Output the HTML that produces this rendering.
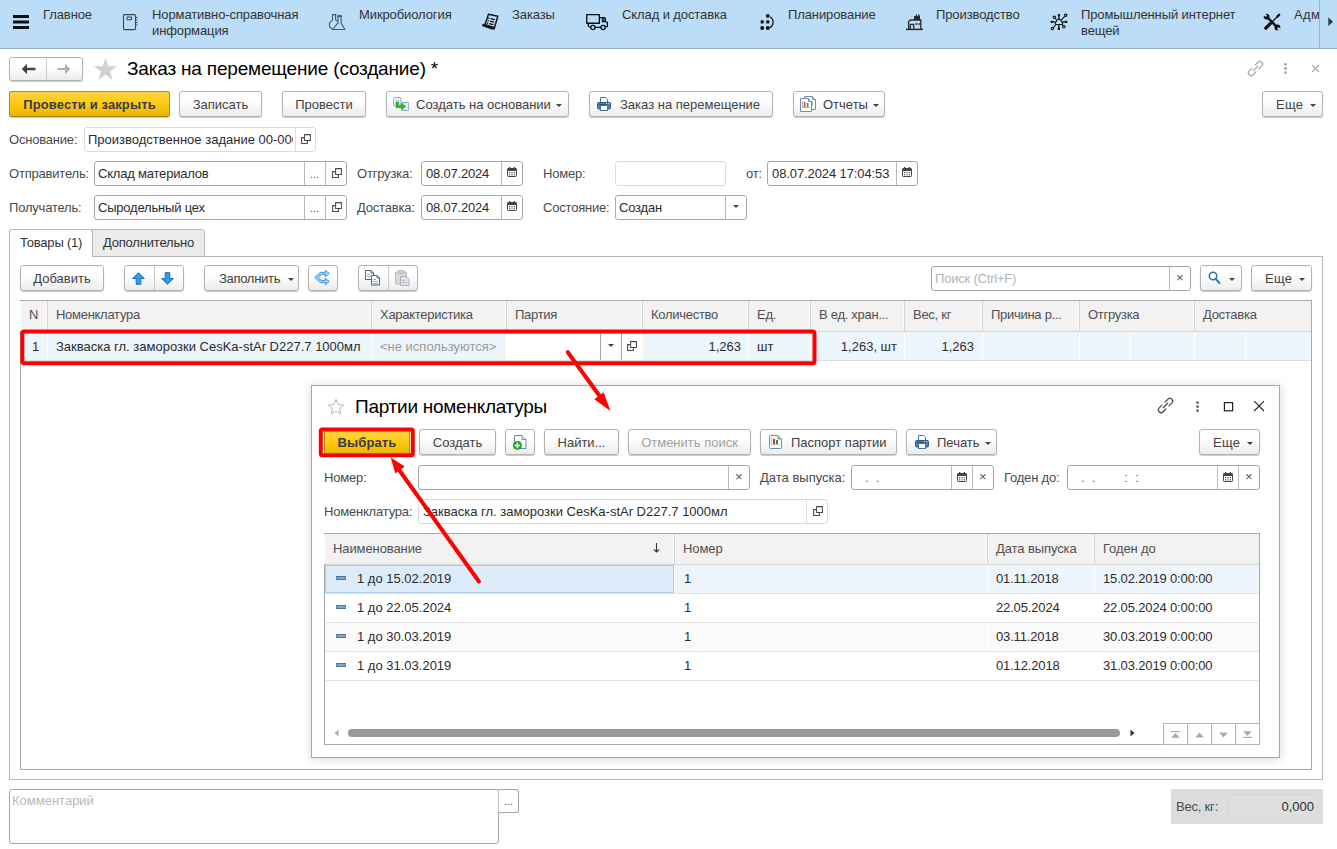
<!DOCTYPE html>
<html lang="ru">
<head>
<meta charset="utf-8">
<title>Заказ на перемещение (создание)</title>
<style>
*{box-sizing:border-box;margin:0;padding:0}
html,body{width:1337px;height:849px;overflow:hidden;background:#fff}
body{font-family:"Liberation Sans",Arial,sans-serif;font-size:13px;color:#333;position:relative}
.abs{position:absolute}
.t{position:absolute;white-space:nowrap;line-height:15px;color:#333}
/* top nav */
#nav{position:absolute;left:0;top:0;width:1337px;height:49px;background:#bbddf8;border-bottom:1px solid #93afc9}
#nav .t{color:#333;font-size:13px;line-height:16px;letter-spacing:-0.1px}
/* buttons */
.btn{position:absolute;height:26px;border:1px solid #b2b2b2;border-radius:3px;background:linear-gradient(#ffffff,#ffffff 35%,#ececec);box-shadow:0 1px 1px rgba(0,0,0,.22);font-size:13px;line-height:24px;padding-top:1px;color:#424242;white-space:nowrap;text-align:center}
.btn.y{background:linear-gradient(#fdd540,#fdc90e 50%,#ecb500);border-color:#b99100 #b99100 #a07c00;font-weight:bold;color:#383b4e;letter-spacing:.12px}
.btn.dis{color:#a2a2a2}
.acaret{position:absolute;width:0;height:0;border-left:3px solid transparent;border-right:3px solid transparent;border-top:3px solid #444}
.caret{display:inline-block;width:0;height:0;border-left:3px solid transparent;border-right:3px solid transparent;border-top:3px solid #444;vertical-align:middle;margin-left:5px;position:relative;top:0}
/* fields */
.fld{position:absolute;height:25px;border:1px solid #a6a6a6;border-radius:3px;background:#fff;font-size:13px;line-height:23px;color:#2c2c2c;white-space:nowrap;overflow:hidden;padding-left:3px;letter-spacing:-.2px}
.fld.ro{border-color:#dcdcdc}
.sep{position:absolute;top:0;bottom:0;width:1px;background:#b9b9b9}
.ro .sep{background:#dcdcdc}
.lbl{position:absolute;white-space:nowrap;font-size:13px;line-height:15px;color:#4a4a4a;letter-spacing:-.2px}
/* grid */
.grid{position:absolute;border:1px solid #a9a9a9;background:#fff}
.gh{position:absolute;background:#f2f2f2;border-bottom:1px solid #d4d4d4}
.hc{position:absolute;top:0;height:100%;border-left:1px solid #d4d4d4;font-size:13px;line-height:15px;color:#505050;white-space:nowrap;padding:8px 0 0 8px;letter-spacing:-.28px}
.gh.mg .hc{padding-top:6px}
.gh.dg .hc{padding-top:7px;letter-spacing:-.1px}
.hc{box-shadow:-1px 0 0 #fbfbfb}
.dc{letter-spacing:-.15px}
.cell{position:absolute;white-space:nowrap;font-size:13px;line-height:15px;color:#2c2c2c}
</style>
</head>
<body>

<!-- ================= TOP NAV ================= -->
<div id="nav">
  <svg class="abs" style="left:13px;top:15px" width="16" height="14" viewBox="0 0 16 14"><rect x="0" y="0" width="16" height="3" fill="#111"/><rect x="0" y="5.5" width="16" height="3" fill="#111"/><rect x="0" y="11" width="16" height="3" fill="#111"/></svg>
  <div class="t" style="left:43px;top:7px">Главное</div>
  <div class="t" style="left:152px;top:7px">Нормативно-справочная<br>информация</div>
  <div class="t" style="left:359px;top:7px">Микробиология</div>
  <div class="t" style="left:512px;top:7px">Заказы</div>
  <div class="t" style="left:622px;top:7px">Склад и доставка</div>
  <div class="t" style="left:788px;top:7px">Планирование</div>
  <div class="t" style="left:936px;top:7px">Производство</div>
  <div class="t" style="left:1081px;top:7px">Промышленный интернет<br>вещей</div>
  <div class="t" style="left:1294px;top:7px;width:25px;overflow:hidden;letter-spacing:.4px">Адм</div>
</div>

<!-- notebook -->
<svg class="abs" style="left:122px;top:14px" width="17" height="17" viewBox="0 0 17 17" fill="none" stroke="#444" stroke-width="1.100"><rect x="1.500" y="0.600" width="12" height="15" rx="1.200"/><rect x="5" y="3" width="4.500" height="2.800" rx=".6"/><path d="M13.500 3.500h2M13.500 6h2M13.500 8.500h2M13.500 11h2" stroke-width="1"/></svg>
<!-- flasks -->
<svg class="abs" style="left:328px;top:14px" width="18" height="17" viewBox="0 0 18 17" fill="none" stroke="#4a5865" stroke-width="1.100" stroke-linejoin="round"><path d="M4 0.700h4.200" stroke-width="1.300"/><path d="M4.500 0.700V6.200L1.500 8.800V12.600L4.500 15.500M7.600 0.700V6L9.800 7.300"/><ellipse cx="11.600" cy="1.900" rx="2" ry=".7"/><path d="M10 2.200V8.900L4.500 15.500H16.900L13.100 8.900V2.200"/></svg>
<!-- orders -->
<svg class="abs" style="left:481px;top:13px" width="18" height="18" viewBox="0 0 18 18"><path d="M7.500 1.200L16.800 3.300 13.200 15.800 3.600 12.600z" fill="#bbddf8" stroke="#111" stroke-width="1.400" stroke-linejoin="round"/><path d="M1.300 11.300l2.600-.6 9.600 3.200-.4 2.400-2.400.2-8.600-2.900c-.9-.4-1.300-1.300-.8-2.300z" fill="#111"/><path d="M7.300 5l1.200.3M9.600 5.600l4.200 1M6.600 7.500l1.200.3M8.900 8.100l4.200 1M5.900 10l1.200.3M8.200 10.600l4.200 1" stroke="#111" stroke-width="1.300"/></svg>
<!-- truck -->
<svg class="abs" style="left:585px;top:13px" width="24" height="18" viewBox="0 0 24 18" fill="none" stroke="#0a0a0a" stroke-width="1.300" stroke-linejoin="round"><rect x="1.750" y="1.550" width="12.600" height="8.700"/><path d="M14.400 4.700h5.200l.8 1v2.900l2 .7v4.400h-2.200"/><path d="M17.300 4.700v3.900h3.100M18.800 4.700v3.900" stroke-width="1.100"/><path d="M3.300 10.200v2.800l2.400 1.500M10 14.400h6"/><circle cx="7.900" cy="14.500" r="2.100"/><circle cx="18.100" cy="14.500" r="2.100"/></svg>
<!-- planning -->
<svg class="abs" style="left:759px;top:13px" width="17" height="18" viewBox="0 0 17 18"><g fill="#111"><circle cx="8.800" cy="2.900" r="1.900"/><rect x="1.600" y="7.300" width="3.200" height="3.200" rx=".8"/><rect x="7.200" y="7.300" width="3.200" height="3.200" rx=".8"/><circle cx="3.200" cy="15" r="2"/><circle cx="8.800" cy="15" r="2"/></g><path d="M11.200 4c3.900 2 3.900 8.400-.3 10.800" fill="none" stroke="#111" stroke-width="1.200"/></svg>
<!-- factory -->
<svg class="abs" style="left:906px;top:14px" width="17" height="17" viewBox="0 0 17 17" fill="none" stroke="#2a2a2a" stroke-width="1.300"><path d="M0 15.400h17" stroke-width="1.500"/><path d="M2.600 15.400V7.500l2-1.500h10.200v9.400"/><path d="M8 6V2h1.800V0.600h1.400V2h1V0.600h1.400V2h.4v4z" fill="#2a2a2a" stroke="none"/><path d="M4.300 15.400v-5h3.400v5M9.500 10h2.200M12.600 10h1.800"/></svg>
<!-- iot -->
<svg class="abs" style="left:1050px;top:13px" width="19" height="18" viewBox="0 0 19 18" fill="none" stroke="#151515" stroke-width="1.100"><path d="M5.600 11.500h6.800c.5-1.300 0-2.800-1.300-3.600-.6-1.300-1.700-1.900-2.900-1.600-1.300.2-2 1.200-2.100 2.400-.9.700-1.100 1.800-.5 2.800z" stroke-width="1.200" stroke-linejoin="round"/><path d="M8.900 6.200V1.800M8.900 11.500v4.600M5.200 8.900H1.600M12.600 8.900h3.700" stroke-width="1.400"/><path d="M11.300 7.100l3.600-4M5.900 11.500l-2.800 3.300M6.400 6.400L5 5M12 11.500l1.100 1.400"/><g fill="#151515" stroke="none"><rect x="7.800" y="0.900" width="2.200" height="2.200" rx=".5"/><rect x="7.800" y="14.700" width="2.200" height="2.200" rx=".5"/><rect x="0.700" y="7.800" width="2.200" height="2.200" rx=".5"/><rect x="15" y="7.800" width="2.200" height="2.200" rx=".5"/></g><g fill="#bbddf8" stroke-width="1.100"><circle cx="15.700" cy="2.300" r="1.200"/><circle cx="2.400" cy="15.600" r="1.200"/><circle cx="4.300" cy="4.300" r="1.200"/><circle cx="13.800" cy="13.800" r="1.200"/></g></svg>
<!-- tools -->
<svg class="abs" style="left:1263px;top:13px" width="18" height="18" viewBox="0 0 18 18" fill="none" stroke="#111" stroke-linecap="round"><path d="M4.500 4.500l9.500 9.500" stroke-width="2.500"/><circle cx="3.600" cy="3.600" r="2.900" fill="#111" stroke="none"/><path d="M3.200 3.200L0 0" stroke="#bbddf8" stroke-width="2.200" stroke-linecap="butt"/><circle cx="14.400" cy="14.400" r="2.900" fill="#111" stroke="none"/><path d="M14.800 14.800L18 18" stroke="#bbddf8" stroke-width="2.200" stroke-linecap="butt"/><path d="M16 2L9.500 8.500" stroke-width="1.300"/><path d="M16.200 1.800l-1.800 1.800" stroke-width="2.300"/><path d="M7.300 10.700L2.800 15.200" stroke-width="3.300"/></svg>
<!-- nav scroller -->
<div class="abs" style="left:1319px;top:0;width:1px;height:48px;background:#98b6d2"></div>
<svg class="abs" style="left:1328px;top:17px" width="6" height="10" viewBox="0 0 6 10"><path d="M0.300 0.300L5 4.700 0.300 9.100z" fill="#333"/></svg>


<!-- ================= FORM HEADER ================= -->
<div id="hdr">
  <div class="btn" style="left:9px;top:57px;width:74px;height:24px"></div>
  <div class="abs" style="left:46px;top:58px;width:1px;height:22px;background:#c8c8c8"></div>
  <svg class="abs" style="left:21px;top:63px" width="15" height="12" viewBox="0 0 15 12"><path d="M6 0.800L0.800 6 6 11.200V7.300h8.500V4.700H6z" fill="#444"/></svg>
  <svg class="abs" style="left:57px;top:63px" width="14" height="12" viewBox="0 0 14 12"><path d="M8 0.800L13.200 6 8 11.200V7.100H0.500V4.900H8z" fill="#b0b0b0"/></svg>
  <svg class="abs" style="left:93px;top:57px" width="25" height="24" viewBox="0 0 25 24"><path d="M12.500 1l2.900 8.300h8.600l-6.900 5.200 2.600 8.500-7.200-5.200-7.200 5.200 2.600-8.500L1 9.300h8.600z" fill="#d2d2d2"/></svg>
  <div class="t" style="left:127px;top:58px;font-size:19px;letter-spacing:-.18px;line-height:22px;color:#000">Заказ на перемещение (создание) *</div>
  <svg class="abs" style="left:1247px;top:60px;overflow:visible" width="17" height="17" viewBox="0 0 17 17" fill="none" stroke="#a8a8a8" stroke-width="1.200" stroke-linecap="round"><g transform="rotate(-45 8.500 8.500)"><path d="M6.300 5.750H2.350a2.750 2.750 0 0 0 0 5.500H6.300"/><path d="M10.700 5.750h3.950a2.750 2.750 0 0 1 0 5.500H10.700"/><path d="M5.300 8.500h6.400"/></g></svg>
  <svg class="abs" style="left:1283px;top:62px" width="5" height="13" viewBox="0 0 5 13" fill="#a8a8a8"><circle cx="2.500" cy="2.300" r="1.400"/><circle cx="2.500" cy="6.500" r="1.400"/><circle cx="2.500" cy="10.700" r="1.400"/></svg>
  <svg class="abs" style="left:1311px;top:64px" width="9" height="9" viewBox="0 0 9 9" stroke="#a8a8a8" stroke-width="1.100"><path d="M1 1l7 7M8 1l-7 7"/></svg>
</div>

<!-- ================= COMMAND BAR ================= -->
<div id="cmd">
  <div class="btn y" style="left:9px;top:91px;width:161px">Провести и закрыть</div>
  <div class="btn" style="left:179px;top:91px;width:83px">Записать</div>
  <div class="btn" style="left:282px;top:91px;width:84px">Провести</div>
  <div class="btn" style="left:386px;top:91px;width:183px;text-align:left;padding-left:29px">Создать на основании<span class="caret"></span></div>
  <svg class="abs" style="left:393px;top:97px" width="16" height="14" viewBox="0 0 16 14"><rect x="0.500" y="0.500" width="7.500" height="8.500" rx="1" fill="#eef4fa" stroke="#8fafc8"/><path d="M2 3h4M2 5h3" stroke="#b8cce0"/><rect x="8.800" y="5.500" width="7" height="8" rx="1" fill="#e4eef8" stroke="#7f9fbc"/><path d="M3 5h2.600v3.200h3V6l4 3.500-4 3.500v-2.300H3z" fill="#2fb62f" stroke="#1f9a1f" stroke-width=".5" stroke-linejoin="round"/></svg>
  <div class="btn" style="left:589px;top:91px;width:184px;text-align:left;padding-left:30px">Заказ на перемещение</div>
  <svg class="abs prn" style="left:597px;top:97px" width="14" height="14" viewBox="0 0 14 14"><path d="M3.500 0.500h5l2 2v3h-7z" fill="#fff" stroke="#4a74a0"/><rect x="0.500" y="5.500" width="13" height="6.500" rx="1.300" fill="#4f7fb5" stroke="#2f5a88"/><path d="M2 7.500h10" stroke="#2a4e78"/><rect x="9" y="6.300" width="1" height="1" fill="#fff"/><rect x="11" y="6.300" width="1" height="1" fill="#fff"/><rect x="3.500" y="8.500" width="7" height="5" fill="#fff" stroke="#4a74a0"/></svg>
  <div class="btn" style="left:793px;top:91px;width:92px;text-align:left;padding-left:29px">Отчеты<span class="caret"></span></div>
  <svg class="abs" style="left:800px;top:96px" width="17" height="16" viewBox="0 0 17 16"><path d="M4.500 0.500h8l3 3v10h-11z" fill="#fff" stroke="#6f8fa8" stroke-linejoin="round"/><path d="M12.500 0.500v3h3" fill="#cfdbe6" stroke="#6f8fa8"/><rect x="11" y="5.500" width="1.600" height="4" fill="#3aa53a"/><path d="M0.500 2.500h8l3 3v10h-11z" fill="#fff" stroke="#6f8fa8" stroke-linejoin="round"/><path d="M8.500 2.500v3h3" fill="#cfdbe6" stroke="#6f8fa8"/><path d="M2.500 5v6.500h7" fill="none" stroke="#9a9a9a" stroke-width=".8"/><rect x="3.800" y="6" width="1.600" height="5" fill="#ee3a2a"/><rect x="6.800" y="7" width="1.700" height="4" fill="#3aa53a"/></svg>
  <div class="btn" style="left:1262px;top:91px;width:61px;text-align:left;padding-left:13px;letter-spacing:.3px">Еще<span class="caret" style="margin-left:7px"></span></div>
</div>

<!-- ================= FIELDS ================= -->
<div id="fields">
  <div class="lbl" style="left:9px;top:132px">Основание:</div>
  <div class="fld ro" style="left:84px;top:127px;width:232px;letter-spacing:0"><span style="display:inline-block;width:205px;overflow:hidden;vertical-align:top">Производственное задание 00-000</span><i class="sep" style="left:210px"></i></div>
  <svg class="abs" style="left:301px;top:134px" width="10" height="10" viewBox="0 0 10 10" fill="none" stroke="#4a4a4a" stroke-width="1.050"><path d="M3.600 0.600h5.800v5.800h-5.800z"/><path d="M3.600 3.600h-3v5.800h5.800v-3"/></svg>
  <div class="lbl" style="left:9px;top:166px">Отправитель:</div>
  <div class="fld" style="left:94px;top:161px;width:253px">Склад материалов<i class="sep" style="left:209px"></i><i class="sep" style="left:230px"></i></div>
  <div class="t" style="left:310px;top:167px;font-size:11px;color:#444">...</div>
  <svg class="abs" style="left:332px;top:168px" width="10" height="10" viewBox="0 0 10 10" fill="none" stroke="#4a4a4a" stroke-width="1.050"><path d="M3.600 0.600h5.800v5.800h-5.800z"/><path d="M3.600 3.600h-3v5.800h5.800v-3"/></svg>
  <div class="lbl" style="left:357px;top:166px">Отгрузка:</div>
  <div class="fld" style="left:421px;top:161px;width:102px;padding-left:4px">08.07.2024<i class="sep" style="left:79px"></i></div>
  <svg class="abs" style="left:507px;top:167px" width="10" height="10" viewBox="0 0 10 10"><rect x="0.500" y="1.500" width="9" height="8" rx="0.800" fill="#fff" stroke="#444"/><rect x="0.500" y="1.500" width="9" height="2.500" fill="#444"/><rect x="2" y="0" width="1.300" height="2" fill="#444"/><rect x="6.700" y="0" width="1.300" height="2" fill="#444"/><g fill="#555"><rect x="2" y="5" width="1.200" height="1.200"/><rect x="4.400" y="5" width="1.200" height="1.200"/><rect x="6.800" y="5" width="1.200" height="1.200"/><rect x="2" y="7.200" width="1.200" height="1.200"/><rect x="4.400" y="7.200" width="1.200" height="1.200"/><rect x="6.800" y="7.200" width="1.200" height="1.200"/></g></svg>
  <div class="lbl" style="left:543px;top:166px">Номер:</div>
  <div class="fld ro" style="left:615px;top:161px;width:111px"></div>
  <div class="lbl" style="left:746px;top:166px">от:</div>
  <div class="fld" style="left:767px;top:161px;width:151px;padding-left:4px;letter-spacing:-.1px">08.07.2024 17:04:53<i class="sep" style="left:128px"></i></div>
  <svg class="abs" style="left:902px;top:167px" width="10" height="10" viewBox="0 0 10 10"><rect x="0.500" y="1.500" width="9" height="8" rx="0.800" fill="#fff" stroke="#444"/><rect x="0.500" y="1.500" width="9" height="2.500" fill="#444"/><rect x="2" y="0" width="1.300" height="2" fill="#444"/><rect x="6.700" y="0" width="1.300" height="2" fill="#444"/><g fill="#555"><rect x="2" y="5" width="1.200" height="1.200"/><rect x="4.400" y="5" width="1.200" height="1.200"/><rect x="6.800" y="5" width="1.200" height="1.200"/><rect x="2" y="7.200" width="1.200" height="1.200"/><rect x="4.400" y="7.200" width="1.200" height="1.200"/><rect x="6.800" y="7.200" width="1.200" height="1.200"/></g></svg>
  <div class="lbl" style="left:9px;top:200px">Получатель:</div>
  <div class="fld" style="left:94px;top:195px;width:253px">Сыродельный цех<i class="sep" style="left:209px"></i><i class="sep" style="left:230px"></i></div>
  <div class="t" style="left:310px;top:201px;font-size:11px;color:#444">...</div>
  <svg class="abs" style="left:332px;top:202px" width="10" height="10" viewBox="0 0 10 10" fill="none" stroke="#4a4a4a" stroke-width="1.050"><path d="M3.600 0.600h5.800v5.800h-5.800z"/><path d="M3.600 3.600h-3v5.800h5.800v-3"/></svg>
  <div class="lbl" style="left:357px;top:200px">Доставка:</div>
  <div class="fld" style="left:421px;top:195px;width:102px;padding-left:4px">08.07.2024<i class="sep" style="left:79px"></i></div>
  <svg class="abs" style="left:507px;top:201px" width="10" height="10" viewBox="0 0 10 10"><rect x="0.500" y="1.500" width="9" height="8" rx="0.800" fill="#fff" stroke="#444"/><rect x="0.500" y="1.500" width="9" height="2.500" fill="#444"/><rect x="2" y="0" width="1.300" height="2" fill="#444"/><rect x="6.700" y="0" width="1.300" height="2" fill="#444"/><g fill="#555"><rect x="2" y="5" width="1.200" height="1.200"/><rect x="4.400" y="5" width="1.200" height="1.200"/><rect x="6.800" y="5" width="1.200" height="1.200"/><rect x="2" y="7.200" width="1.200" height="1.200"/><rect x="4.400" y="7.200" width="1.200" height="1.200"/><rect x="6.800" y="7.200" width="1.200" height="1.200"/></g></svg>
  <div class="lbl" style="left:543px;top:200px">Состояние:</div>
  <div class="fld" style="left:615px;top:195px;width:132px">Создан<i class="sep" style="left:109px"></i></div>
  <i class="acaret" style="left:733px;top:205px"></i>
</div>

<!-- ================= TABS + PANEL ================= -->
<div id="panel">
  <!-- tab panel frame -->
  <div class="abs" style="left:9px;top:256px;width:1314px;height:524px;border:1px solid #b8b8b8;background:#fff"></div>
  <div class="abs" style="left:92px;top:229px;width:113px;height:28px;border:1px solid #b8b8b8;background:#ececec;border-radius:0 3px 0 0"></div>
  <div class="abs" style="left:9px;top:229px;width:84px;height:28px;border:1px solid #b8b8b8;border-bottom:0;background:#fff;border-radius:3px 3px 0 0"></div>
  <div class="t" style="left:20px;top:235px;letter-spacing:-.2px">Товары (1)</div>
  <div class="t" style="left:103px;top:235px;letter-spacing:-.2px">Дополнительно</div>
  <!-- toolbar -->
  <div class="btn" style="left:20px;top:265px;width:84px">Добавить</div>
  <div class="btn" style="left:124px;top:265px;width:60px"></div>
  <div class="abs" style="left:154px;top:266px;width:1px;height:24px;background:#c8c8c8"></div>
  <svg class="abs" style="left:132px;top:272px" width="13" height="13" viewBox="0 0 13 13"><path d="M6.500 0.700L12.300 6.500H8.800v5.800H4.200V6.500H0.700z" fill="#349be6" stroke="#1c6fb4" stroke-width="1" stroke-linejoin="round"/></svg>
  <svg class="abs" style="left:161px;top:272px" width="13" height="13" viewBox="0 0 13 13"><path d="M6.500 12.300L12.300 6.500H8.800V0.700H4.200v5.800H0.700z" fill="#349be6" stroke="#1c6fb4" stroke-width="1" stroke-linejoin="round"/></svg>
  <div class="btn" style="left:204px;top:265px;width:95px;text-align:left;padding-left:14px;letter-spacing:-.3px">Заполнить<span class="caret" style="margin-left:8px"></span></div>
  <div class="btn" style="left:308px;top:265px;width:30px"></div>
  <svg class="abs" style="left:314px;top:269px" width="16" height="17" viewBox="0 0 16 17" fill="#9bd2f6" stroke="#2b8bd3" stroke-width=".9" stroke-linejoin="round"><path d="M0.800 8.500L6.300 3.400H11.300V1.200L15.200 4.500 11.300 7.800V5.600H7.300L4.200 8.500 7.300 11.400H11.300V9.200L15.200 12.500 11.300 15.800V13.600H6.300z"/></svg>
  <div class="btn" style="left:358px;top:265px;width:60px"></div>
  <div class="abs" style="left:388px;top:266px;width:1px;height:24px;background:#c8c8c8"></div>
  <svg class="abs" style="left:365px;top:270px" width="16" height="16" viewBox="0 0 16 16" fill="#fff" stroke="#4a6580" stroke-width="1"><path d="M0.500 0.500h5.500l2.500 2.500v6.500h-8z"/><path d="M6 0.500v2.500h2.500" fill="none"/><path d="M2 4.500h3M2 6.500h5" stroke="#9ab" /><path d="M6.500 5.500h5.500l2.500 2.500v7h-8z"/><path d="M12 5.500v2.500h2.500" fill="none"/><path d="M8 9.500h3M8 11.500h5M8 13.500h5" stroke="#9ab"/></svg>
  <svg class="abs" style="left:395px;top:270px" width="15" height="16" viewBox="0 0 15 16"><rect x="0.500" y="2" width="11" height="12" rx="1" fill="#d9d9d9" stroke="#c4b5aa"/><rect x="3" y="0.500" width="6" height="3" rx="1" fill="#cfcfd4" stroke="#b8b8c0"/><path d="M5.500 6.500h5.500l3 3v6h-8.500z" fill="#dfe3e8" stroke="#aab2bc"/><path d="M7 10.500h3M7 12.500h5" stroke="#b8c0c8"/></svg>
  <div class="fld" style="left:931px;top:266px;width:260px;color:#b4b4b4;padding-left:3px">Поиск (Ctrl+F)<i class="sep" style="left:237px"></i></div>
  <div class="t" style="left:1176px;top:270px;color:#555">×</div>
  <div class="btn" style="left:1200px;top:265px;width:42px"></div>
  <svg class="abs" style="left:1208px;top:271px" width="13" height="14" viewBox="0 0 13 14" fill="none"><circle cx="5" cy="5" r="3.700" stroke="#2577b3" stroke-width="1.500"/><path d="M7.800 8l3.700 4.200" stroke="#2577b3" stroke-width="1.900" stroke-linecap="round"/></svg>
  <i class="acaret" style="left:1229px;top:278px"></i>
  <div class="btn" style="left:1251px;top:265px;width:61px;text-align:left;padding-left:13px;letter-spacing:.3px">Еще<span class="caret" style="margin-left:7px"></span></div>
  <!-- grid -->
  <div class="grid" style="left:20px;top:300px;width:1292px;height:470px">
    <div class="gh mg" style="left:0;top:0;width:1290px;height:31px"><div class="hc" style="left:0px;width:27px;border-left:0;">N</div><div class="hc" style="left:26px;width:324px;">Номенклатура</div><div class="hc" style="left:350px;width:135px;">Характеристика</div><div class="hc" style="left:485px;width:136px;">Партия</div><div class="hc" style="left:621px;width:106px;">Количество</div><div class="hc" style="left:727px;width:62px;">Ед.</div><div class="hc" style="left:789px;width:94px;">В ед. хран...</div><div class="hc" style="left:883px;width:78px;">Вес, кг</div><div class="hc" style="left:961px;width:97px;">Причина р...</div><div class="hc" style="left:1058px;width:115px;">Отгрузка</div><div class="hc" style="left:1173px;width:117px;">Доставка</div></div>
    <div class="abs" style="left:0;top:31px;width:1290px;height:29px;background:#edf5fd;border-bottom:1px solid #dcdcdc"></div>
  </div>
  <!-- row cell separators -->
  <div class="abs" style="left:47px;top:332px;width:1px;height:28px;background:#fff"></div><div class="abs" style="left:371px;top:332px;width:1px;height:28px;background:#fff"></div><div class="abs" style="left:506px;top:332px;width:1px;height:28px;background:#fff"></div><div class="abs" style="left:642px;top:332px;width:1px;height:28px;background:#fff"></div><div class="abs" style="left:748px;top:332px;width:1px;height:28px;background:#fff"></div><div class="abs" style="left:810px;top:332px;width:1px;height:28px;background:#fff"></div><div class="abs" style="left:904px;top:332px;width:1px;height:28px;background:#fff"></div><div class="abs" style="left:982px;top:332px;width:1px;height:28px;background:#fff"></div><div class="abs" style="left:1079px;top:332px;width:1px;height:28px;background:#fff"></div><div class="abs" style="left:1130px;top:332px;width:1px;height:28px;background:#fff"></div><div class="abs" style="left:1194px;top:332px;width:1px;height:28px;background:#fff"></div><div class="abs" style="left:1245px;top:332px;width:1px;height:28px;background:#fff"></div>
  <div class="cell" style="left:32px;top:339px">1</div>
  <div class="cell" style="left:56px;top:339px">Закваска гл. заморозки CesKa-stAr D227.7 1000мл</div>
  <div class="cell" style="left:380px;top:339px;color:#9a9a9a">&lt;не используются&gt;</div>
  <div class="abs" style="left:506px;top:332px;width:136px;height:28px;background:#fff"></div>
  <div class="abs" style="left:600px;top:332px;width:1px;height:28px;background:#a4a4a4"></div>
  <div class="abs" style="left:621px;top:332px;width:1px;height:28px;background:#a4a4a4"></div>
  <i class="acaret" style="left:608px;top:344px"></i>
  <svg class="abs" style="left:627px;top:341px" width="10" height="10" viewBox="0 0 10 10" fill="none" stroke="#4a4a4a" stroke-width="1.050"><path d="M3.600 0.600h5.800v5.800h-5.800z"/><path d="M3.600 3.600h-3v5.800h5.800v-3"/></svg>
  <div class="cell" style="left:643px;top:339px;width:98px;text-align:right">1,263</div>
  <div class="cell" style="left:757px;top:339px">шт</div>
  <div class="cell" style="left:811px;top:339px;width:86px;text-align:right">1,263, шт</div>
  <div class="cell" style="left:905px;top:339px;width:69px;text-align:right">1,263</div>
</div>

<!-- ================= DIALOG ================= -->
<div id="dlg">
  <div class="abs" style="left:311px;top:385px;width:969px;height:373px;background:#fff;border:1px solid #a8a8a8;box-shadow:0 1px 9px rgba(0,0,0,.17)"></div>
  <svg class="abs" style="left:327px;top:398px" width="18" height="17" viewBox="0 0 18 17"><path d="M9 1.300l2.200 5.300 5.600.4-4.300 3.600 1.400 5.500L9 13.100l-4.900 3 1.400-5.500L1.200 7l5.600-.4z" fill="#fff" stroke="#aab0b8" stroke-width=".9"/></svg>
  <div class="t" style="left:355px;top:396px;font-size:19px;letter-spacing:-.26px;line-height:22px;color:#000">Партии номенклатуры</div>
  <svg class="abs" style="left:1157px;top:397px;overflow:visible" width="17" height="17" viewBox="0 0 17 17" fill="none" stroke="#4a4a4a" stroke-width="1.200" stroke-linecap="round"><g transform="rotate(-45 8.500 8.500)"><path d="M6.300 5.750H2.350a2.750 2.750 0 0 0 0 5.500H6.300"/><path d="M10.700 5.750h3.950a2.750 2.750 0 0 1 0 5.500H10.700"/><path d="M5.300 8.500h6.400"/></g></svg>
  <svg class="abs" style="left:1195px;top:400px" width="5" height="13" viewBox="0 0 5 13" fill="#666"><circle cx="2.500" cy="2.600" r="1.400"/><circle cx="2.500" cy="6.700" r="1.400"/><circle cx="2.500" cy="10.700" r="1.400"/></svg>
  <svg class="abs" style="left:1223px;top:401px" width="11" height="11" viewBox="0 0 11 11" fill="none" stroke="#222" stroke-width="1.200"><rect x="1.400" y="1.600" width="8.200" height="8.200"/></svg>
  <svg class="abs" style="left:1253px;top:400px" width="12" height="12" viewBox="0 0 12 12" stroke="#222" stroke-width="1.100"><path d="M1.200 1.200l9.800 9.800M11 1.200L1.200 11"/></svg>
  <!-- toolbar -->
  <div class="btn y" style="left:324px;top:430px;width:86px;height:25px;line-height:22px;border-radius:0;box-shadow:none">Выбрать</div>
  <div class="btn" style="left:419px;top:429px;width:77px">Создать</div>
  <div class="btn" style="left:505px;top:429px;width:30px"></div>
  <svg class="abs" style="left:512px;top:435px" width="15" height="16" viewBox="0 0 15 16"><path d="M2.500 0.500h7.500l4 4v9h-11.500z" fill="#fff" stroke="#6f88a4" stroke-linejoin="round"/><path d="M10 0.500v4h4" fill="#eef2f6" stroke="#6f88a4"/><circle cx="5.400" cy="10.400" r="4.500" fill="#1f9d1f"/><path d="M5.400 7.600v5.600M2.600 10.400h5.600" stroke="#fff" stroke-width="1.500"/></svg>
  <div class="btn" style="left:544px;top:429px;width:75px">Найти...</div>
  <div class="btn dis" style="left:628px;top:429px;width:123px">Отменить поиск</div>
  <div class="btn" style="left:760px;top:429px;width:137px;text-align:left;padding-left:30px">Паспорт партии</div>
  <svg class="abs" style="left:769px;top:435px" width="13" height="14" viewBox="0 0 13 14"><path d="M1.500 0.500h7.500l3.500 3.500v8.500a1 1 0 0 1-1 1h-10a1 1 0 0 1-1-1v-11a1 1 0 0 1 1-1z" fill="#fff" stroke="#6f8fa8"/><path d="M9 0.500v3.500h3.500" fill="#b8c8d6" stroke="#6f8fa8"/><path d="M2.500 2.500v7h8" fill="none" stroke="#a8a8b8" stroke-width=".8"/><rect x="4" y="4" width="2" height="5" fill="#f01e1e"/><rect x="7" y="5" width="2" height="4" fill="#1f9d1f"/></svg>
  <div class="btn" style="left:906px;top:429px;width:91px;text-align:left;padding-left:30px">Печать<span class="caret"></span></div>
  <svg class="abs prn" style="left:915px;top:435px" width="14" height="14" viewBox="0 0 14 14"><path d="M3.500 0.500h5l2 2v3h-7z" fill="#fff" stroke="#4a74a0"/><rect x="0.500" y="5.500" width="13" height="6.500" rx="1.300" fill="#4f7fb5" stroke="#2f5a88"/><path d="M2 7.500h10" stroke="#2a4e78"/><rect x="9" y="6.300" width="1" height="1" fill="#fff"/><rect x="11" y="6.300" width="1" height="1" fill="#fff"/><rect x="3.500" y="8.500" width="7" height="5" fill="#fff" stroke="#4a74a0"/></svg>
  <div class="btn" style="left:1199px;top:429px;width:61px;text-align:left;padding-left:13px;letter-spacing:.3px">Еще<span class="caret" style="margin-left:7px"></span></div>
  <!-- filter row -->
  <div class="lbl" style="left:324px;top:470px">Номер:</div>
  <div class="fld" style="left:418px;top:465px;width:332px"><i class="sep" style="left:309px"></i></div>
  <div class="t" style="left:735px;top:469px;color:#555">×</div>
  <div class="lbl" style="left:760px;top:470px;letter-spacing:0">Дата выпуска:</div>
  <div class="fld" style="left:851px;top:465px;width:143px;color:#666;padding-left:13px;letter-spacing:0">. &nbsp;.<i class="sep" style="left:99px"></i><i class="sep" style="left:120px"></i></div>
  <svg class="abs" style="left:957px;top:472px" width="10" height="10" viewBox="0 0 10 10"><rect x="0.500" y="1.500" width="9" height="8" rx="0.800" fill="#fff" stroke="#444"/><rect x="0.500" y="1.500" width="9" height="2.500" fill="#444"/><rect x="2" y="0" width="1.300" height="2" fill="#444"/><rect x="6.700" y="0" width="1.300" height="2" fill="#444"/><g fill="#555"><rect x="2" y="5" width="1.200" height="1.200"/><rect x="4.400" y="5" width="1.200" height="1.200"/><rect x="6.800" y="5" width="1.200" height="1.200"/><rect x="2" y="7.200" width="1.200" height="1.200"/><rect x="4.400" y="7.200" width="1.200" height="1.200"/><rect x="6.800" y="7.200" width="1.200" height="1.200"/></g></svg>
  <div class="t" style="left:979px;top:469px;color:#555">×</div>
  <div class="lbl" style="left:1004px;top:470px">Годен до:</div>
  <div class="fld" style="left:1067px;top:465px;width:193px;color:#666;padding-left:13px;letter-spacing:0">. &nbsp;. &nbsp; &nbsp; &nbsp; &nbsp;: &nbsp;:<i class="sep" style="left:149px"></i><i class="sep" style="left:170px"></i></div>
  <svg class="abs" style="left:1223px;top:472px" width="10" height="10" viewBox="0 0 10 10"><rect x="0.500" y="1.500" width="9" height="8" rx="0.800" fill="#fff" stroke="#444"/><rect x="0.500" y="1.500" width="9" height="2.500" fill="#444"/><rect x="2" y="0" width="1.300" height="2" fill="#444"/><rect x="6.700" y="0" width="1.300" height="2" fill="#444"/><g fill="#555"><rect x="2" y="5" width="1.200" height="1.200"/><rect x="4.400" y="5" width="1.200" height="1.200"/><rect x="6.800" y="5" width="1.200" height="1.200"/><rect x="2" y="7.200" width="1.200" height="1.200"/><rect x="4.400" y="7.200" width="1.200" height="1.200"/><rect x="6.800" y="7.200" width="1.200" height="1.200"/></g></svg>
  <div class="t" style="left:1245px;top:469px;color:#555">×</div>
  <div class="lbl" style="left:324px;top:504px">Номенклатура:</div>
  <div class="fld ro" style="left:418px;top:499px;width:410px;padding-left:4px;letter-spacing:0">Закваска гл. заморозки CesKa-stAr D227.7 1000мл<i class="sep" style="left:387px"></i></div>
  <svg class="abs" style="left:813px;top:506px" width="10" height="10" viewBox="0 0 10 10" fill="none" stroke="#4a4a4a" stroke-width="1.050"><path d="M3.600 0.600h5.800v5.800h-5.800z"/><path d="M3.600 3.600h-3v5.800h5.800v-3"/></svg>
  <!-- list -->
  <div class="grid" style="left:324px;top:533px;width:936px;height:212px"></div>
  <div class="gh dg" style="left:325px;top:534px;width:934px;height:31px">
    <div class="hc" style="left:0;width:349px;border-left:0">Наименование</div>
    <div class="hc" style="left:349px;width:313px">Номер</div>
    <div class="hc" style="left:662px;width:107px">Дата выпуска</div>
    <div class="hc" style="left:769px;width:165px">Годен до</div>
  </div>
  <svg class="abs" style="left:653px;top:543px" width="7" height="10" viewBox="0 0 7 10" fill="none" stroke="#333" stroke-width="1.100"><path d="M3.500 0v9M1 6.500l2.500 2.500 2.500-2.500"/></svg>
  <div class="abs" style="left:325px;top:565px;width:934px;height:29px;background:#eef5fc;border-bottom:1px solid #e2e2e2"></div><div class="abs" style="left:325px;top:565px;width:349px;height:28px;background:#dcecfa;border:1px solid #a9cdee"></div><div class="abs" style="left:674px;top:565px;width:1px;height:28px;background:#fff"></div><div class="abs" style="left:987px;top:565px;width:1px;height:28px;background:#fff"></div><div class="abs" style="left:1094px;top:565px;width:1px;height:28px;background:#fff"></div><div class="abs" style="left:336px;top:576px;width:10px;height:4px;background:#7fa8d0;border:1px solid #5f87ad;border-top-color:#4f7396;border-bottom-color:#4f7396"></div><div class="cell" style="left:357px;top:571px">1 до 15.02.2019</div><div class="cell" style="left:684px;top:571px">1</div><div class="cell dc" style="left:996px;top:571px">01.11.2018</div><div class="cell dc" style="left:1103px;top:571px">15.02.2019 0:00:00</div><div class="abs" style="left:325px;top:594px;width:934px;height:29px;background:#fff;border-bottom:1px solid #e2e2e2"></div><div class="abs" style="left:674px;top:594px;width:1px;height:28px;background:transparent"></div><div class="abs" style="left:987px;top:594px;width:1px;height:28px;background:transparent"></div><div class="abs" style="left:1094px;top:594px;width:1px;height:28px;background:transparent"></div><div class="abs" style="left:336px;top:605px;width:10px;height:4px;background:#7fa8d0;border:1px solid #5f87ad;border-top-color:#4f7396;border-bottom-color:#4f7396"></div><div class="cell" style="left:357px;top:600px">1 до 22.05.2024</div><div class="cell" style="left:684px;top:600px">1</div><div class="cell dc" style="left:996px;top:600px">22.05.2024</div><div class="cell dc" style="left:1103px;top:600px">22.05.2024 0:00:00</div><div class="abs" style="left:325px;top:623px;width:934px;height:29px;background:#fafafa;border-bottom:1px solid #e2e2e2"></div><div class="abs" style="left:674px;top:623px;width:1px;height:28px;background:#fff"></div><div class="abs" style="left:987px;top:623px;width:1px;height:28px;background:#fff"></div><div class="abs" style="left:1094px;top:623px;width:1px;height:28px;background:#fff"></div><div class="abs" style="left:336px;top:634px;width:10px;height:4px;background:#7fa8d0;border:1px solid #5f87ad;border-top-color:#4f7396;border-bottom-color:#4f7396"></div><div class="cell" style="left:357px;top:629px">1 до 30.03.2019</div><div class="cell" style="left:684px;top:629px">1</div><div class="cell dc" style="left:996px;top:629px">03.11.2018</div><div class="cell dc" style="left:1103px;top:629px">30.03.2019 0:00:00</div><div class="abs" style="left:325px;top:652px;width:934px;height:29px;background:#fff;border-bottom:1px solid #e2e2e2"></div><div class="abs" style="left:674px;top:652px;width:1px;height:28px;background:transparent"></div><div class="abs" style="left:987px;top:652px;width:1px;height:28px;background:transparent"></div><div class="abs" style="left:1094px;top:652px;width:1px;height:28px;background:transparent"></div><div class="abs" style="left:336px;top:663px;width:10px;height:4px;background:#7fa8d0;border:1px solid #5f87ad;border-top-color:#4f7396;border-bottom-color:#4f7396"></div><div class="cell" style="left:357px;top:658px">1 до 31.03.2019</div><div class="cell" style="left:684px;top:658px">1</div><div class="cell dc" style="left:996px;top:658px">01.12.2018</div><div class="cell dc" style="left:1103px;top:658px">31.03.2019 0:00:00</div>
  <!-- h scrollbar -->
  <svg class="abs" style="left:334px;top:729px" width="5" height="8" viewBox="0 0 5 8"><path d="M4.500 0.500v7L0.500 4z" fill="#b0b0b0"/></svg>
  <div class="abs" style="left:348px;top:729px;width:772px;height:8px;border-radius:4px;background:#999"></div>
  <svg class="abs" style="left:1130px;top:729px" width="5" height="8" viewBox="0 0 5 8"><path d="M0.500 0.500v7L4.500 4z" fill="#333"/></svg>
  <div class="abs" style="left:1163px;top:723px;width:97px;height:22px;border:1px solid #b4b4b4;background:#fff"></div>
  <div class="abs" style="left:1187px;top:724px;width:1px;height:20px;background:#b4b4b4"></div>
  <div class="abs" style="left:1211px;top:724px;width:1px;height:20px;background:#b4b4b4"></div>
  <div class="abs" style="left:1235px;top:724px;width:1px;height:20px;background:#b4b4b4"></div>
  <svg class="abs" style="left:1171px;top:731px" width="9" height="7" viewBox="0 0 9 7" fill="#acacac"><rect x="0" y="0" width="9" height="1.200"/><path d="M4.500 2L8.800 6.800h-8.600z"/></svg>
  <svg class="abs" style="left:1195px;top:732px" width="9" height="6" viewBox="0 0 9 6" fill="#acacac"><path d="M4.500 0.500L8.800 5.500h-8.600z"/></svg>
  <svg class="abs" style="left:1219px;top:732px" width="9" height="6" viewBox="0 0 9 6" fill="#acacac"><path d="M4.500 5.500L8.800 0.500h-8.600z"/></svg>
  <svg class="abs" style="left:1243px;top:731px" width="9" height="7" viewBox="0 0 9 7" fill="#acacac"><rect x="0" y="5.800" width="9" height="1.200"/><path d="M4.500 5L8.800 0.200h-8.600z"/></svg>
</div>

<!-- ================= BOTTOM ================= -->
<div id="bottom">
  <div class="abs" style="left:9px;top:789px;width:490px;height:55px;border:1px solid #a6a6a6;border-radius:3px;background:#fff"></div>
  <div class="t" style="left:12px;top:793px;color:#b8b8b8">Комментарий</div>
  <div class="abs" style="left:498px;top:789px;width:21px;height:24px;border:1px solid #a6a6a6;border-left-color:#c0c0c0;border-radius:0 3px 3px 0;background:#fff"></div>
  <div class="t" style="left:504px;top:794px;font-size:11px;color:#555">...</div>
  <div class="abs" style="left:1171px;top:789px;width:152px;height:35px;background:#dcdcdc"></div>
  <div class="abs" style="left:1228px;top:794px;width:90px;height:24px;background:#dedede;border:1px solid #d6d6d6;border-radius:3px"></div>
  <div class="lbl" style="left:1176px;top:799px">Вес, кг:</div>
  <div class="cell" style="left:1228px;top:799px;width:86px;text-align:right">0,000</div>
</div>

<!-- ================= ANNOTATIONS ================= -->
<svg id="anno" class="abs" style="left:0;top:0;pointer-events:none" width="1337" height="849" viewBox="0 0 1337 849">
  <rect x="22.300" y="331.400" width="792.200" height="31.800" rx="2" fill="none" stroke="#ff0000" stroke-width="4"/>
  <rect x="320.800" y="429.600" width="92" height="25.600" rx="1.500" fill="none" stroke="#ff0000" stroke-width="4"/>
  <path d="M567.800 352.200L600 396.500" stroke="#ff0000" stroke-width="4" stroke-linecap="round" fill="none"/>
  <path d="M610.500 411.100L594.300 399.200 603.600 392.300z" fill="#ff0000"/>
  <path d="M478.900 581.500L399.500 470.500" stroke="#ff0000" stroke-width="4" stroke-linecap="round" fill="none"/>
  <path d="M390.700 457.400L395.300 473.600 404.700 466.500z" fill="#ff0000"/>
</svg>

</body>
</html>
